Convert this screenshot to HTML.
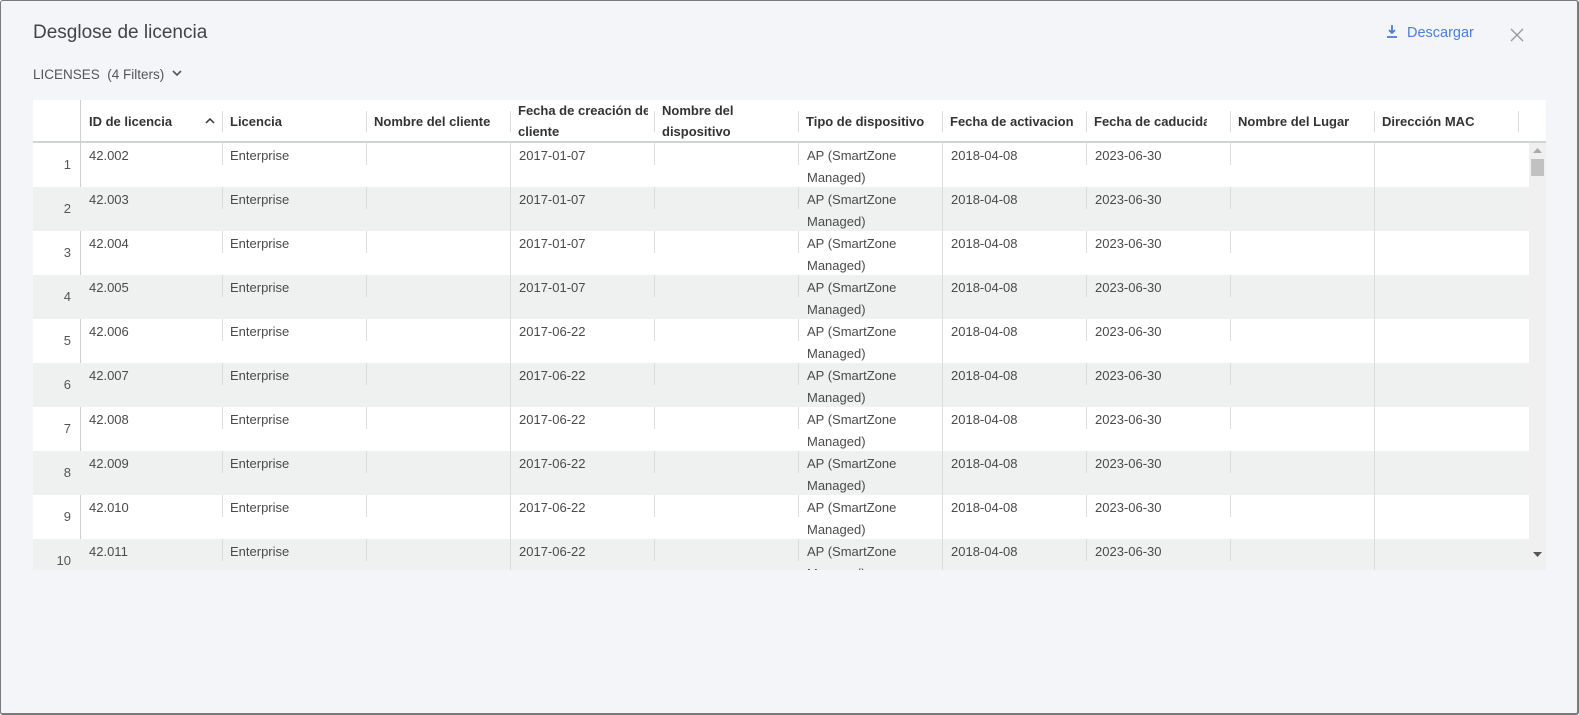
<!DOCTYPE html>
<html><head><meta charset="utf-8"><style>
*{margin:0;padding:0;box-sizing:border-box}
body{width:1579px;height:715px;background:#f3f5f9;font-family:"Liberation Sans",sans-serif;color:#333;position:relative;overflow:hidden}
.frame{position:absolute;left:0;top:0;width:1579px;height:715px;border:1px solid #7a7a7a;border-right-width:2px;border-bottom-width:2px;border-radius:3px}
.title{position:absolute;left:33px;top:22px;font-size:19px;color:#444}
.lic{position:absolute;left:33px;top:67px;font-size:13.5px;color:#555}
.dl{position:absolute;left:1385px;top:24px;font-size:14.5px;color:#4a7fd8}
.x{position:absolute;left:1510px;top:25px;font-size:20px;color:#999}
.tbl{position:absolute;left:33px;top:100px;width:1513px;height:470px;background:#fff;overflow:hidden}
.hdr{position:absolute;left:0;top:0;height:43px;width:1513px;border-bottom:2px solid #cfd3d8;background:#fff}
.h{position:absolute;font-size:13px;font-weight:bold;color:#333;line-height:21px}
.sep{position:absolute;width:1px;background:#dcdcdc}
.row{position:absolute;left:0;width:1496px;height:44px}
.row.alt{background:#eff0f0}
.c{position:absolute;top:2px;font-size:13px;line-height:21.5px;color:#4a4a4a}
.n{position:absolute;left:0;width:38px;text-align:right;top:14px;font-size:13px;color:#555}
.sb{position:absolute;left:1496px;top:43px;width:17px;height:427px;background:#f0f0f0}
</style></head><body>
<div class="frame"></div>
<div class="title">Desglose de licencia</div>
<div class="lic">LICENSES&nbsp; (4 Filters) &nbsp;<svg width="10" height="7" viewBox="0 0 10 7" style="vertical-align:2px"><path d="M1 1l4 4 4-4" stroke="#555" stroke-width="1.6" fill="none"/></svg></div>
<div class="dl"><svg width="14" height="15" viewBox="0 0 14 15" style="vertical-align:-2px;margin-right:8px"><path d="M7 1v8M4 6l3 3 3-3" stroke="#4a7fd8" stroke-width="1.8" fill="none"/><path d="M2 13h10" stroke="#4a7fd8" stroke-width="1.8"/></svg>Descargar</div>
<div class="x"><svg width="14" height="14" viewBox="0 0 14 14"><path d="M1 1l12 12M13 1L1 13" stroke="#999" stroke-width="1.4"/></svg></div>
<div class="tbl">
<div class="hdr">
<div class="sep" style="left:47px;top:0;height:470px;background:#cfcfcf"></div>
<div class="h" style="left:56px;top:11px">ID de licencia</div>
<svg style="position:absolute;left:172px;top:18px" width="10" height="6" viewBox="0 0 10 6"><path d="M1 5l4-4 4 4" stroke="#333" stroke-width="1.5" fill="none"/></svg>
<div class="sep" style="left:189px;top:11px;height:21px"></div>
<div class="h" style="left:197px;top:11px">Licencia</div>
<div class="sep" style="left:333px;top:11px;height:21px"></div>
<div class="h" style="left:341px;top:11px">Nombre del cliente</div>
<div class="sep" style="left:477px;top:11px;height:21px"></div>
<div class="h" style="left:485px;top:0px;width:130px;white-space:nowrap;overflow:hidden">Fecha de creación del<br>cliente</div>
<div class="sep" style="left:621px;top:11px;height:21px"></div>
<div class="h" style="left:629px;top:0px">Nombre del<br>dispositivo</div>
<div class="sep" style="left:765px;top:11px;height:21px"></div>
<div class="h" style="left:773px;top:11px">Tipo de dispositivo</div>
<div class="sep" style="left:909px;top:11px;height:21px"></div>
<div class="h" style="left:917px;top:11px;width:126px;white-space:nowrap;overflow:hidden">Fecha de activacion</div>
<div class="sep" style="left:1053px;top:11px;height:21px"></div>
<div class="h" style="left:1061px;top:11px;width:113px;white-space:nowrap;overflow:hidden">Fecha de caducidad</div>
<div class="sep" style="left:1197px;top:11px;height:21px"></div>
<div class="h" style="left:1205px;top:11px">Nombre del Lugar</div>
<div class="sep" style="left:1341px;top:11px;height:21px"></div>
<div class="h" style="left:1349px;top:11px">Dirección MAC</div>
<div class="sep" style="left:1485px;top:11px;height:21px"></div>
</div>
<div id="rows"></div>
<div class="sb">
<svg style="position:absolute;left:4px;top:5px" width="9" height="5"><path d="M0 5L4.5 0 9 5z" fill="#aaa"/></svg>
<div style="position:absolute;left:2px;top:16px;width:13px;height:17px;background:#c1c1c1"></div>
<svg style="position:absolute;left:4px;top:409px" width="9" height="5"><path d="M0 0L4.5 5 9 0z" fill="#555"/></svg>
</div>
</div>
<script>
var ids=["42.002","42.003","42.004","42.005","42.006","42.007","42.008","42.009","42.010","42.011"];
var fc=["2017-01-07","2017-01-07","2017-01-07","2017-01-07","2017-06-22","2017-06-22","2017-06-22","2017-06-22","2017-06-22","2017-06-22"];
var h="";
for(var i=0;i<10;i++){
var t=43+i*44;
h+='<div class="row'+(i%2?' alt':'')+'" style="top:'+t+'px">'+
'<div class="n">'+(i+1)+'</div>'+
'<div class="c" style="left:56px">'+ids[i]+'</div>'+
'<div class="sep" style="left:189px;top:0;height:22px"></div>'+
'<div class="c" style="left:197px">Enterprise</div>'+
'<div class="sep" style="left:333px;top:0;height:22px"></div>'+
'<div class="sep" style="left:477px;top:0;height:44px"></div>'+
'<div class="c" style="left:486px">'+fc[i]+'</div>'+
'<div class="sep" style="left:621px;top:0;height:22px"></div>'+
'<div class="sep" style="left:765px;top:0;height:22px"></div>'+
'<div class="c" style="left:774px">AP (SmartZone<br>Managed)</div>'+
'<div class="sep" style="left:909px;top:0;height:44px"></div>'+
'<div class="c" style="left:918px">2018-04-08</div>'+
'<div class="sep" style="left:1053px;top:0;height:22px"></div>'+
'<div class="c" style="left:1062px">2023-06-30</div>'+
'<div class="sep" style="left:1197px;top:0;height:22px"></div>'+
'<div class="sep" style="left:1341px;top:0;height:44px"></div>'+
'</div>';
}
document.getElementById("rows").innerHTML=h;
</script>
</body></html>
